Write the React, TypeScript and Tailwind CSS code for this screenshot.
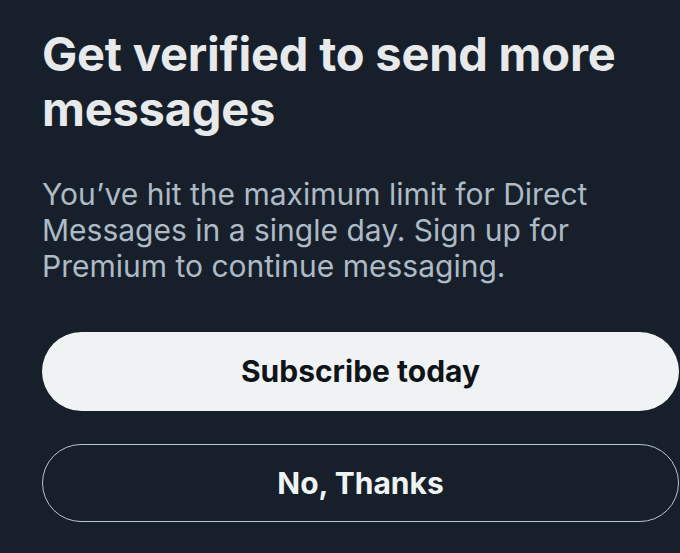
const App = () => {
  return (
    <div
      className="w-[680px] h-[553px] overflow-hidden bg-[#17202a] pl-[42px] pr-[1px] pt-[26px]"
      style={{ fontFamily: 'Inter, "Liberation Sans", sans-serif' }}
    >
      <h1 className="text-[47px] leading-[55px] font-bold text-[#e7e9ea] tracking-[-0.2px]">
        Get verified to send more messages
      </h1>
      <p className="mt-[40px] text-[30px] leading-[36px] text-[#aebac6] pr-[50px]">
        You’ve hit the maximum limit for Direct Messages in a single day. Sign up for Premium to
        continue messaging.
      </p>
      <div className="mt-[48px] flex flex-col gap-[33px]">
        <button className="h-[79px] w-full rounded-full bg-[#eff3f4] text-[#0f1419] text-[30px] font-bold">
          Subscribe today
        </button>
        <button className="h-[78px] w-full rounded-full border-[1.5px] border-[#b9c5cf] text-[#eff3f4] text-[30px] font-bold">
          No, Thanks
        </button>
      </div>
    </div>
  );
};

export default App;
